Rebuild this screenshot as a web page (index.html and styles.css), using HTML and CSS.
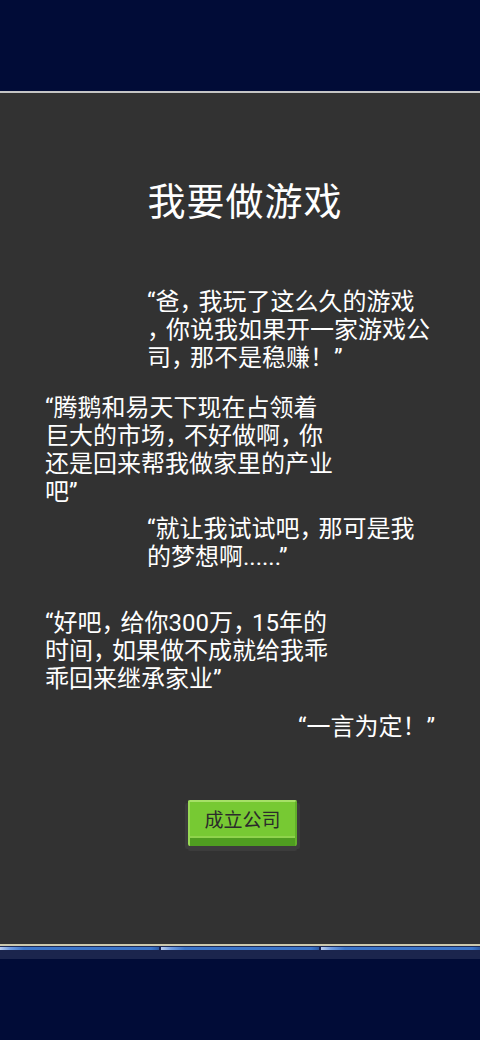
FILE: index.html
```html
<!DOCTYPE html>
<html lang="zh-CN">
<head>
<meta charset="utf-8">
<title>我要做游戏</title>
<link rel="stylesheet" href="styles.css">
</head>
<body>
  <div class="top-band"></div>
  <main class="panel">
    <h1 class="title">我要做游戏</h1>
    <p class="line indent">“爸<span class="pc">，</span>我玩了这么久的游戏<br><span class="pc">，</span>你说我如果开一家游戏公<br>司<span class="pc">，</span>那不是稳赚！”</p>
    <p class="line left gap-a">“腾鹅和易天下现在占领着<br>巨大的市场<span class="pc">，</span>不好做啊<span class="pc">，</span>你<br>还是回来帮我做家里的产业<br>吧”</p>
    <p class="line indent gap-b">“就让我试试吧<span class="pc">，</span>那可是我<br>的梦想啊......”</p>
    <p class="line left gap-c">“好吧<span class="pc">，</span>给你300万<span class="pc">，</span>15年的<br>时间<span class="pc">，</span>如果做不成就给我乖<br>乖回来继承家业”</p>
    <p class="line promise gap-d">“一言为定！”</p>
    <div class="actions">
      <button class="btn" type="button">成立公司</button>
    </div>
  </main>
  <footer class="bottom">
    <div class="rule"></div>
    <div class="tabs">
      <span class="tab"></span>
      <span class="tab"></span>
      <span class="tab"></span>
    </div>
    <div class="shelf"></div>
  </footer>
</body>
</html>
```

FILE: styles.css
```css
html, body {
  margin: 0;
  padding: 0;
}

body {
  width: 480px;
  height: 1040px;
  background: #010c37;
  font-family: Roboto, "Noto Sans CJK SC", sans-serif;
  color: #ffffff;
  overflow: hidden;
}

.top-band {
  height: 91px;
  background: #010c37;
}

.panel {
  height: 853px;
  box-sizing: border-box;
  border-top: 2px solid #c4c4c4;
  background: #323232;
  padding-top: 89px;
}

.title {
  margin: 0;
  font-size: 38px;
  line-height: 40px;
  font-weight: 400;
  letter-spacing: 1px;
  text-align: center;
  padding-left: 10px;
}

.line {
  margin: 66px 0 0;
  font-size: 24px;
  line-height: 28px;
}

/* narrower CJK commas */
.pc {
  letter-spacing: -5px;
}

.indent {
  padding-left: 147px;
}

.left {
  padding-left: 45px;
}

.promise {
  padding-left: 298px;
}

.gap-a { margin-top: 22px; }
.gap-b { margin-top: 9px; }
.gap-c { margin-top: 38px; }
.gap-d { margin-top: 20px; }

.actions {
  display: flex;
  justify-content: center;
  padding-left: 5px;
  margin-top: 59px;
}

.btn {
  width: 109px;
  height: 46px;
  box-sizing: border-box;
  padding: 2px 0 8px;
  border: 0;
  border-top: 2px solid #a6e067;
  border-left: 2px solid #98d955;
  border-right: 2px solid #62b02a;
  border-radius: 2px;
  background: #77c933;
  box-shadow:
    inset 0 -8px 0 #4f9d20,
    inset 0 -10px 0 #8fd34c,
    0 5px 0 #3c3c3c,
    -3px 3px 0 #3c3c3c,
    3px 3px 0 #3c3c3c;
  font-family: Roboto, "Noto Sans CJK SC", sans-serif;
  font-size: 19px;
  line-height: 34px;
  color: #2b2b2b;
}

.bottom {
  display: flex;
  flex-direction: column;
}

.rule {
  height: 2px;
  background: #cdc9ad;
  border-bottom: 1px solid #1e2b56;
}

.tabs {
  display: flex;
  gap: 2px;
  height: 3px;
  background: #142050;
}

.tab {
  flex: 1;
  background: linear-gradient(90deg, #b9cdef 0, #6f9be0 10px, #3d76c9 24px, #3d76c9 calc(100% - 8px), #2b5aa6 100%);
}

.shelf {
  height: 9px;
  background: #1b254d;
}
```
